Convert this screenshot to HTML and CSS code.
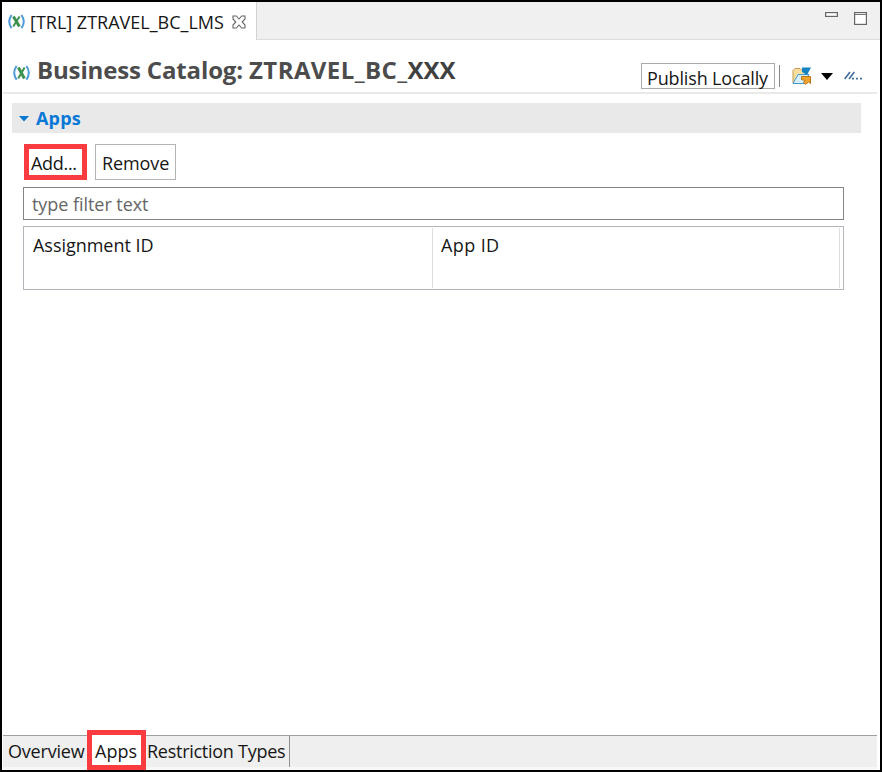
FILE: index.html
```
<!DOCTYPE html>
<html lang="en">
<head>
<meta charset="utf-8">
<title>Business Catalog</title>
<link rel="stylesheet" href="styles.css">
</head>
<body>
<div class="window">
  <header class="tabbar">
    <div class="tab">
      <svg class="tab-icon" width="17" height="16" viewBox="0 0 17 16" fill="none">
        <path d="M3.600 1Q-1.200 7.500 3.600 14.200M13.400 1Q18.200 7.500 13.400 14.200" stroke="#4d9bd8" stroke-width="2"/>
        <path d="M5.400 2.500L11.400 12.500" stroke="#3f9150" stroke-width="3"/><path d="M11.600 2.500L5.200 12.500" stroke="#3f9150" stroke-width="2"/>
      </svg>
      <span class="tab-label">[TRL] ZTRAVEL_BC_LMS</span>
      <svg class="close" width="14" height="14" viewBox="0 0 14 14" fill="#fff" stroke="#666" stroke-width="1.100">
        <path d="M1 1H4.300L7 4L9.700 1H13V4L10.200 7L13 10V13H9.700L7 10L4.300 13H1V10L3.800 7L1 4Z"/>
      </svg>
    </div>
    <div class="window-controls">
      <svg width="13" height="5" viewBox="0 0 13 5"><rect x=".6" y=".6" width="11.800" height="3.800" fill="#fff" stroke="#666" stroke-width="1.200"/></svg>
      <svg class="maximize" width="13" height="13" viewBox="0 0 13 13"><rect x=".6" y=".6" width="11.800" height="11.800" fill="#fff" stroke="#666" stroke-width="1.200"/><path d="M1 2.500H12" stroke="#777"/></svg>
    </div>
  </header>
  <div class="heading">
    <svg class="heading-icon" width="17" height="16" viewBox="0 0 17 16" fill="none">
      <path d="M3.600 1Q-1.200 7.700 3.600 14.800M13.400 1Q18.200 7.700 13.400 14.800" stroke="#4d9bd8" stroke-width="2"/>
      <path d="M5.400 2.500L11.400 13.500" stroke="#3f9150" stroke-width="3"/><path d="M11.600 2.500L5.200 13.500" stroke="#3f9150" stroke-width="2"/>
    </svg>
    <h1><span class="title-name">Business Catalog:</span> <span class="title-id">ZTRAVEL_BC_</span><span class="title-suffix">XXX</span></h1>
    <button class="publish"><span>Publish Locally</span></button>
    <i class="separator"></i>
    <svg class="folder" width="20" height="18" viewBox="0 0 20 18">
      <path d="M1 16V3.500L3 1.500H8L10 3.500H15V16Z" fill="#f7dfa0" stroke="#c69a4c"/>
      <path d="M1 16.500L6 7.500H17L12 16.500Z" fill="#d7effb" stroke="#459bce"/>
      <path d="M10 .5H19L15 8L10 5Z" fill="#1583c2"/>
      <path d="M9.500 9.500H18.500V16.500L16.500 15L13.500 17.300L11.500 15.500L13 13.500L9.500 12.500Z" fill="#eea52d" stroke="#bb7416"/>
    </svg>
    <svg class="arrow" width="12" height="7" viewBox="0 0 12 7"><path d="M0 0H12L6 7Z" fill="#000"/></svg>
    <svg class="more" width="19" height="10" viewBox="0 0 19 10" stroke="#466f9e" fill="none"><path d="M.7 8L6 1M5 8L10.300 1" stroke-width="1.700"/><path d="M8 7.700H18" stroke-width="1.800" stroke-dasharray="2 2"/></svg>
  </div>
  <main>
    <section class="section-title">
      <svg width="10" height="6" viewBox="0 0 10 6"><path d="M0 0H10L5 5.500Z" fill="#0878d0"/></svg>
      <h2>Apps</h2>
    </section>
    <div class="actions">
      <button class="add highlighted"><span>Add...</span></button>
      <button class="remove"><span>Remove</span></button>
    </div>
    <input class="filter" type="text" placeholder="type filter text" aria-label="Filter">
    <div class="table">
      <div class="column"><span class="assignment">Assignment ID</span></div>
      <div class="column"><span class="app-id">App ID</span></div>
    </div>
  </main>
  <footer class="pages">
    <div class="page overview"><span>Overview</span></div>
    <div class="page apps highlighted"><span>Apps</span></div>
    <div class="page types"><span>Restriction Types</span></div>
  </footer>
</div>
</body>
</html>
```
FILE: styles.css
```
* { box-sizing: border-box; }
body { margin: 0; font: 18px/24px "Open Sans", "Noto Sans", sans-serif; color: #161616; }
svg { display: block; flex: none; }
button { font: inherit; color: inherit; padding: 0; border-radius: 0; background: #fff; text-align: left; white-space: nowrap; }
span { white-space: nowrap; }
.window { width: 882px; height: 772px; border: 2px solid #000; background: #fff; display: flex; flex-direction: column; overflow: hidden; }
.tabbar { height: 38px; display: flex; justify-content: space-between; background: #f0f0f0; border-bottom: 1px solid #dcdcdc; flex: none; }
.tab { width: 255px; height: 38px; display: flex; background: #fff; border-right: 1px solid #d2d2d2; }
.tab-icon { margin: 12px 0 0 6px; }
.tab-label { width: 195px; margin: 8px 0 0 5px; letter-spacing: 0; }
.close { margin: 13px 0 0 7px; }
.window-controls { display: flex; gap: 16px; padding: 10px 13px 0 0; }
.heading { height: 54px; display: flex; border-bottom: 2px solid #e9e9e9; margin: 0 3px 0 1px; flex: none; }
.heading-icon { margin: 25px 0 0 10px; }
h1 { width: 604px; flex: none; margin: 14px 0 0 7px; font-size: 24px; line-height: 32px; color: #4c4c4c; white-space: nowrap; letter-spacing: -.15px; }
.title-id { letter-spacing: .4px; }
.title-suffix { letter-spacing: 0; color: #404040; }
.publish { width: 134px; height: 26px; flex: none; margin-top: 23px; border: 1px solid #aaa; padding-left: 5px; }
.publish span { display: block; margin-top: 2px; letter-spacing: -.15px; }
.separator { width: 1px; height: 22px; margin: 25px 0 0 4px; background: #888; }
.folder { margin: 27px 0 0 12px; }
.arrow { margin: 33px 0 0 9px; }
.more { margin: 31px 0 0 11px; }
main { flex: 1; padding: 9px 19px 0 10px; }
.section-title { height: 30px; background: #e9e9e9; display: flex; align-items: center; padding-left: 7px; gap: 7px; }
.section-title svg { margin-top: 2px; }
h2 { margin: 0; font-size: 18px; line-height: 24px; color: #0878d7; letter-spacing: .2px; }
.actions { height: 54px; padding: 11px 0 0 12px; display: flex; gap: 8px; }
.add { width: 63px; height: 36px; padding: 1px 0 0 2px; letter-spacing: -.3px; }
.highlighted { border: 5px solid #fa3c41; }
.remove { width: 81px; height: 36px; border: 1px solid #b3b3b3; padding: 1px 0 0 6px; letter-spacing: -.1px; }
.filter { display: block; width: 821px; height: 33px; margin-left: 11px; border: 1px solid #858585; padding: 1px 8px 0; font: inherit; outline: 0; }
.filter::placeholder { color: #666; opacity: 1; letter-spacing: -.05px; }
.table { display: flex; width: 821px; height: 64px; margin: 6px 0 0 11px; border: 1px solid #b4b4bc; padding: 1px 3px 1px 0; }
.column { width: 409px; flex: none; border-right: 1px solid #dedede; padding: 5px 0 0 9px; letter-spacing: -.03px; }
.column + .column { width: 407px; padding-left: 8px; letter-spacing: .4px; }
.pages { height: 35px; background: #efefef; border-top: 1px solid #a0a0a0; border-bottom: 3px solid #f7f7f7; margin: 0 3px 0 1px; display: flex; flex: none; }
.page { height: 31px; padding-top: 3px; }
.overview { width: 84px; padding-left: 5px; letter-spacing: -.2px; }
.apps { width: 59px; height: 40px; margin-top: -6px; background: #fff; padding: 4px 0 0 3px; position: relative; }
.types { width: 144px; padding-left: 1px; border-right: 1px solid #909090; letter-spacing: -.27px; }
```
